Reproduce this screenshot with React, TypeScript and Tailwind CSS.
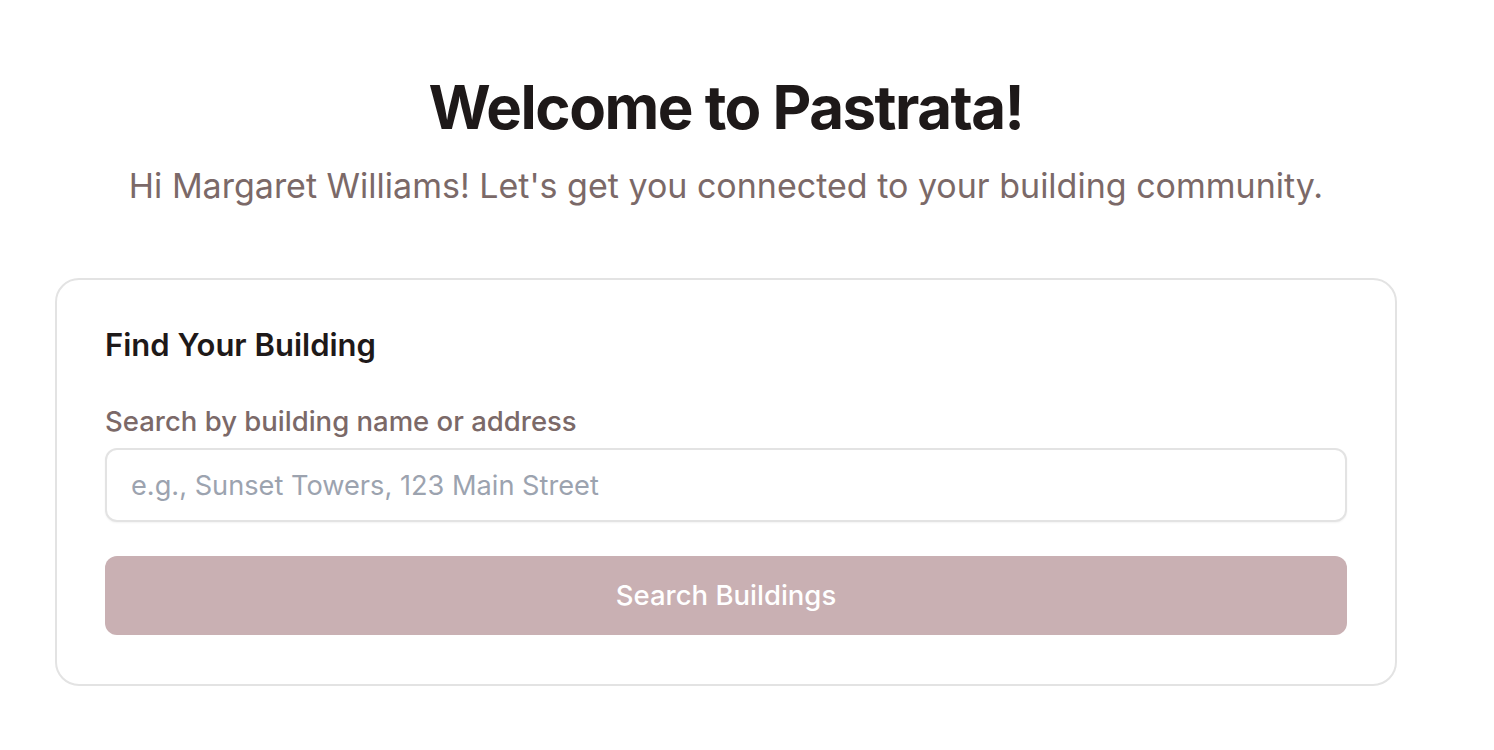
export default function App() {
  return (
    <div
      className="min-h-screen bg-white pl-[55px] pr-[97px] pt-[71px]"
      style={{ fontFamily: "Inter, 'Noto Sans', sans-serif" }}
    >
      <div className="text-center">
        <h1 className="text-[60px] font-bold leading-[72px] tracking-[-0.025em] text-[#1e1919]">
          Welcome to Pastrata!
        </h1>
        <p className="mt-[20px] text-[34px] leading-[46px] text-[#7b6968]">
          Hi Margaret Williams! Let's get you connected to your building community.
        </p>
      </div>

      <div className="mt-[69px] rounded-[24px] border-2 border-[#e3e3e3] bg-white px-[48px] pb-[49px] pt-[45px]">
        <h2 className="text-[31px] font-semibold leading-[40px] text-[#1e1919]">Find Your Building</h2>
        <label className="mt-[36px] block text-[27.5px] font-medium leading-[40px] text-[#7b6968]">
          Search by building name or address
        </label>
        <input
          className="mt-[7px] block h-[74px] w-full rounded-[12px] border-2 border-[#e3e3e3] bg-white px-[24px] text-[27.2px] text-[#1e1919] shadow-[0_1px_2px_rgba(0,0,0,0.05)] outline-none placeholder:text-[#9ca3af]"
          placeholder="e.g., Sunset Towers, 123 Main Street"
        />
        <button className="mt-[34px] flex h-[79px] w-full items-center justify-center rounded-[12px] bg-[#c9b0b3] text-[27.5px] font-medium text-white">
          Search Buildings
        </button>
      </div>
    </div>
  );
}
